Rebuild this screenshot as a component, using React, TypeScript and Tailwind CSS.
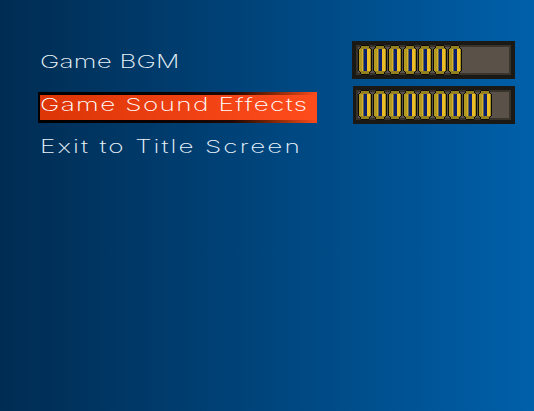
import React from "react";

// Each line of the menu has its own tracking, the font is a stand-in for the game's wide one
const MENU_ITEMS = [
  { id: "bgm", label: "Game BGM", active: false, row: "h-[41px]", tracking: "tracking-[0.14px]" },
  { id: "sfx", label: "Game Sound Effects", active: true, row: "", tracking: "tracking-[0.95px]" },
  { id: "exit", label: "Exit to Title Screen", active: false, row: "h-[47px]", tracking: "tracking-[1.43px]" },
];

// One segment of a volume bar, drawn on a 14x30 pixel grid
const Cell: React.FC = () => (
  <svg width="14" height="30" viewBox="0 0 14 30" shapeRendering="crispEdges" className="shrink-0">
    <path d="M3 0h8v1h1v2h1v1h1v22h-1v1h-1v2h-1v1H3v-1H2v-2H1v-1H0V4h1V3h1V1h1z" fill="#0d0b06" />
    <path d="M3 1h8v2h1v1h1v22h-1v1h-1v2H3v-2H2v-1H1V4h1V3h1z" fill="#94801f" />
    <rect x="1" y="4" width="3" height="22" fill="#b39a22" />
    <rect x="4" y="4" width="1" height="22" fill="#d9ae24" />
    <rect x="5" y="4" width="1" height="22" fill="#5f6a58" />
    <rect x="6" y="4" width="3" height="22" fill="#0c1f6e" />
    <rect x="9" y="4" width="3" height="22" fill="#ecbd26" />
    <rect x="12" y="4" width="1" height="22" fill="#a8901f" />
  </svg>
);

const VolumeBar: React.FC<{ level: number; className?: string }> = ({ level, className = "" }) => (
  <div className={`h-[38px] bg-[#1b1916] py-[4px] pr-[4px] ${className}`}>
    <div className="h-full bg-[#5a5248] border-y-2 border-x-2 border-[#38342c] flex items-center gap-px">
      {Array.from({ length: level }).map((_, i) => (
        <Cell key={i} />
      ))}
    </div>
  </div>
);

const App: React.FC = () => {
  return (
    <div className="w-[534px] h-[411px] overflow-hidden flex bg-gradient-to-r from-[#002c52] to-[#0060aa] font-['Inter',sans-serif] text-[#eaf3fa]">
      <div className="w-[352px] pl-[38px] pt-[41px] flex flex-col">
        {MENU_ITEMS.map((item) =>
          item.active ? (
            <div
              key={item.id}
              className="w-[279px] h-[31px] mt-[10px] bg-gradient-to-r from-black via-[#200800] via-70% to-[#ff4c1c] pl-[2px] py-[3px] flex"
            >
              <div className="flex-1 bg-gradient-to-r from-[#dc3506] to-[#ff4c1c] flex items-center pb-[6px]">
                <span className={`text-[18px] leading-none font-extralight whitespace-nowrap origin-left scale-x-[1.45] text-white ${item.tracking}`}>
                  {item.label}
                </span>
              </div>
            </div>
          ) : (
            <div key={item.id} className={`flex items-center pl-[2px] ${item.row}`}>
              <span className={`text-[18px] leading-none font-extralight whitespace-nowrap origin-left scale-x-[1.45] ${item.tracking}`}>
                {item.label}
              </span>
            </div>
          )
        )}
      </div>
      <div className="pt-[41px] flex flex-col gap-[7px]">
        <VolumeBar level={7} className="w-[163px] pl-[4px]" />
        <VolumeBar level={9} className="w-[162px] ml-px pl-[3px]" />
      </div>
    </div>
  );
};

export default App;
